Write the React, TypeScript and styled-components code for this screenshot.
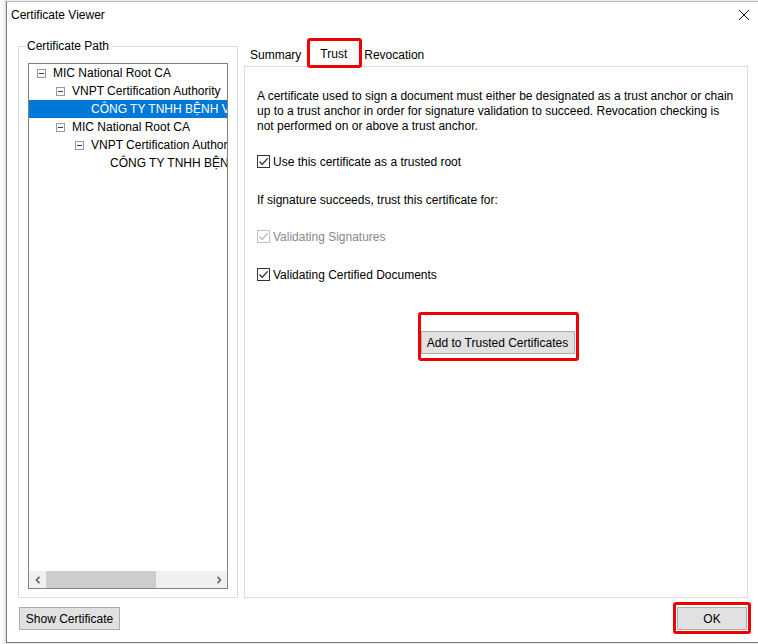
import React from "react";
import styled, { createGlobalStyle } from "styled-components";

const GlobalStyle = createGlobalStyle`
  html, body {
    margin: 0;
    padding: 0;
    background: #ececec;
    overflow: hidden;
  }
  * { box-sizing: border-box; }
`;

const Screen = styled.div`
  display: flex;
  width: 758px;
  height: 644px;
  font-family: "Segoe UI", "Liberation Sans", Arial, sans-serif;
  font-size: 12px;
  color: #000;
`;

const Backdrop = styled.div`
  width: 6px;
  height: 644px;
  background: linear-gradient(to right, #ffffff 0, #f4f4f4 4px, #d8d8d8 6px);
`;

const Dialog = styled.div`
  flex: 1;
  height: 642px;
  margin-top: 1px;
  background: #fff;
  border-left: 1px solid #7d7d7d;
  border-bottom: 1px solid #7d7d7d;
  border-top: 1px solid #bdbdbd;
  display: flex;
  flex-direction: column;
`;

const TitleBar = styled.div`
  height: 26px;
  display: flex;
  align-items: center;
  justify-content: space-between;
  padding: 0 8px 0 4px;
`;

const Title = styled.span`
  font-size: 12px;
`;

const Body = styled.div`
  flex: 1;
  display: grid;
  grid-template-columns: 220px 504px;
  column-gap: 6px;
  padding: 10px 0 0 11px;
`;

const Group = styled.fieldset`
  margin: 0;
  padding: 9px 9px 8px 9px;
  border: 1px solid #dcdcdc;
  height: 560px;
  display: flex;
  flex-direction: column;
  min-width: 0;
`;

const Legend = styled.legend`
  padding: 0 2px;
  margin-left: -3px;
  line-height: 16px;
`;

const TreeBox = styled.div`
  flex: 1;
  border: 1px solid #828282;
  display: flex;
  flex-direction: column;
  overflow: hidden;
`;

const TreeList = styled.div`
  flex: 1;
  overflow: hidden;
`;

const Row = styled.div<{ $level: number; $selected?: boolean }>`
  height: 18px;
  display: flex;
  align-items: center;
  white-space: nowrap;
  padding-left: ${(p) => 8 + p.$level * 19}px;
  background: ${(p) => (p.$selected ? "#0078d7" : "transparent")};
  color: ${(p) => (p.$selected ? "#fff" : "#000")};
`;

const Expander = styled.span<{ $hidden?: boolean }>`
  flex: none;
  width: 9px;
  height: 9px;
  margin-right: 7px;
  border: 1px solid ${(p) => (p.$hidden ? "transparent" : "#9a9a9a")};
  display: flex;
  align-items: center;
  justify-content: center;
  &::after {
    content: "";
    width: 5px;
    height: 1px;
    background: ${(p) => (p.$hidden ? "transparent" : "#1b3f88")};
  }
`;

const HScroll = styled.div`
  height: 17px;
  background: #f0f0f0;
  display: flex;
  align-items: center;
`;

const ScrollArrow = styled.span`
  width: 17px;
  height: 17px;
  display: flex;
  align-items: center;
  justify-content: center;
`;

const ScrollTrack = styled.div`
  flex: 1;
  height: 17px;
  display: flex;
  align-items: center;
`;

const ScrollThumb = styled.div`
  width: 110px;
  height: 17px;
  background: #cdcdcd;
`;

const RightCol = styled.div`
  display: flex;
  flex-direction: column;
  padding-top: 6px;
`;

const TabRow = styled.div`
  height: 22px;
  display: flex;
  align-items: stretch;
`;

const Tab = styled.span<{ $pl: number; $pr: number; $active?: boolean }>`
  display: flex;
  align-items: center;
  padding: 0 ${(p) => p.$pr}px ${(p) => (p.$active ? 2 : 0)}px ${(p) => p.$pl}px;
  background: #fff;
`;

const Marked = styled.div<{ $t: number; $r: number; $b: number; $l: number }>`
  position: relative;
  display: flex;
  &::after {
    content: "";
    position: absolute;
    top: ${(p) => p.$t}px;
    right: ${(p) => p.$r}px;
    bottom: ${(p) => p.$b}px;
    left: ${(p) => p.$l}px;
    border: 3px solid #ee0000;
    border-radius: 3px;
    pointer-events: none;
  }
`;

const Panel = styled.div`
  height: 532px;
  border: 1px solid #dcdcdc;
  padding: 22px 12px 0 12px;
  display: flex;
  flex-direction: column;
  align-items: flex-start;
`;

const Para = styled.p`
  margin: 0;
  line-height: 15px;
`;

const Line = styled.div<{ $gap: number; $muted?: boolean }>`
  margin-top: ${(p) => p.$gap}px;
  height: 15px;
  display: flex;
  align-items: center;
  color: ${(p) => (p.$muted ? "#8a8a8a" : "#000")};
`;

const Box = styled.span<{ $muted?: boolean }>`
  width: 13px;
  height: 13px;
  margin-right: 3px;
  border: 1px solid ${(p) => (p.$muted ? "#c2c2c2" : "#333")};
  background: #fff;
  display: flex;
  align-items: center;
  justify-content: center;
`;

const Center = styled.div`
  align-self: stretch;
  display: flex;
  justify-content: center;
  margin-top: 49px;
  padding-left: 3px;
`;

const Button = styled.button<{ $w: number }>`
  width: ${(p) => p.$w}px;
  height: 23px;
  background: #e1e1e1;
  border: 1px solid #adadad;
  font-family: inherit;
  font-size: 12px;
  color: #000;
  padding: 0;
  display: flex;
  align-items: center;
  justify-content: center;
`;

const Footer = styled.div`
  height: 43px;
  display: flex;
  justify-content: space-between;
  align-items: flex-start;
  padding: 8px 11px 0 12px;
`;

const Check = ({ muted }: { muted?: boolean }) => (
  <Box $muted={muted}>
    <svg width="11" height="11" viewBox="0 0 11 11">
      <path
        d="M1.5 5.5 L4.2 8.3 L9.6 2.4"
        fill="none"
        stroke={muted ? "#b4b4b4" : "#222"}
        strokeWidth="1.2"
      />
    </svg>
  </Box>
);

const CloseIcon = () => (
  <svg width="12" height="12" viewBox="0 0 12 12">
    <path d="M1 1 L11 11 M11 1 L1 11" stroke="#111" strokeWidth="1" />
  </svg>
);

const Chevron = ({ dir }: { dir: "left" | "right" }) => (
  <svg width="6" height="8" viewBox="0 0 6 8">
    <path
      d={dir === "left" ? "M4.5 0.8 L1.5 4 L4.5 7.2" : "M1.5 0.8 L4.5 4 L1.5 7.2"}
      fill="none"
      stroke="#606060"
      strokeWidth="1.6"
    />
  </svg>
);

const tree = [
  { level: 0, text: "MIC National Root CA", exp: true },
  { level: 1, text: "VNPT Certification Authority", exp: true },
  { level: 2, text: "CÔNG TY TNHH BỆNH VIỆN ĐA KHOA", exp: false, sel: true },
  { level: 1, text: "MIC National Root CA", exp: true },
  { level: 2, text: "VNPT Certification Authority", exp: true },
  { level: 3, text: "CÔNG TY TNHH BỆNH VIỆN ĐA KHOA", exp: false },
];

export default function App() {
  return (
    <>
      <GlobalStyle />
      <Screen>
        <Backdrop />
        <Dialog>
          <TitleBar>
            <Title>Certificate Viewer</Title>
            <CloseIcon />
          </TitleBar>
          <Body>
            <Group>
              <Legend>Certificate Path</Legend>
              <TreeBox>
                <TreeList>
                  {tree.map((r, i) => (
                    <Row key={i} $level={r.level} $selected={r.sel}>
                      <Expander $hidden={!r.exp} />
                      {r.text}
                    </Row>
                  ))}
                </TreeList>
                <HScroll>
                  <ScrollArrow>
                    <Chevron dir="left" />
                  </ScrollArrow>
                  <ScrollTrack>
                    <ScrollThumb />
                  </ScrollTrack>
                  <ScrollArrow>
                    <Chevron dir="right" />
                  </ScrollArrow>
                </HScroll>
              </TreeBox>
            </Group>
            <RightCol>
              <TabRow>
                <Tab $pl={6} $pr={6}>Summary</Tab>
                <Marked $t={-6} $r={-2} $b={-2} $l={0}>
                  <Tab $pl={13} $pr={13} $active>
                    Trust
                  </Tab>
                </Marked>
                <Tab $pl={4} $pr={6}>Revocation</Tab>
              </TabRow>
              <Panel>
                <Para>
                  A certificate used to sign a document must either be designated as a trust anchor or chain
                  <br />
                  up to a trust anchor in order for signature validation to succeed. Revocation checking is
                  <br />
                  not performed on or above a trust anchor.
                </Para>
                <Line $gap={20}>
                  <Check />
                  Use this certificate as a trusted root
                </Line>
                <Line $gap={23}>If signature succeeds, trust this certificate for:</Line>
                <Line $gap={22} $muted>
                  <Check muted />
                  Validating Signatures
                </Line>
                <Line $gap={23}>
                  <Check />
                  Validating Certified Documents
                </Line>
                <Center>
                  <Marked $t={-19} $r={-4} $b={-7} $l={-3}>
                    <Button $w={154}>Add to Trusted Certificates</Button>
                  </Marked>
                </Center>
              </Panel>
            </RightCol>
          </Body>
          <Footer>
            <Button $w={101}>Show Certificate</Button>
            <Marked $t={-5} $r={-4} $b={-4} $l={-4}>
              <Button $w={70}>OK</Button>
            </Marked>
          </Footer>
        </Dialog>
      </Screen>
    </>
  );
}
